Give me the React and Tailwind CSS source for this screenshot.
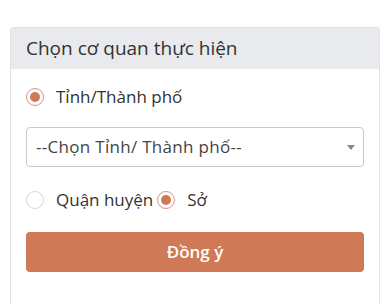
import React from "react";

function Radio({ checked }) {
  return (
    <span
      className={
        "flex h-[18px] w-[18px] shrink-0 items-center justify-center rounded-full border bg-white " +
        (checked ? "border-[#d4967c]" : "border-[#d6d6d6]")
      }
    >
      {checked && <span className="h-[10px] w-[10px] rounded-full bg-[#cf7955]" />}
    </span>
  );
}

export default function App() {
  return (
    <div
      className="h-[304px] w-[392px] overflow-hidden bg-white pt-[27px] pl-[10px]"
      style={{ fontFamily: "'Open Sans', Lato, sans-serif" }}
    >
      <div className="h-[300px] w-[370px] rounded-t-[3px] border border-[#e1e3e6]">
        <div className="flex h-[41px] items-center bg-[#e9eaed] px-[15px] text-[19px] text-[#333]">
          Chọn cơ quan thực hiện
        </div>
        <div className="px-[15px] pt-[16px]">
          <label className="flex h-[24px] items-center gap-[12px] text-[17px] text-[#333]">
            <Radio checked />
            <span>Tỉnh/Thành phố</span>
          </label>
          <div className="mt-[18px] flex h-[40px] w-[338px] items-center justify-between rounded-[4px] border border-[#c9c9c9] pl-[9px] pr-[8px] text-[17px] tracking-[0.3px] text-[#444]">
            <span>--Chọn Tỉnh/ Thành phố--</span>
            <span className="h-0 w-0 border-x-[4px] border-t-[5px] border-x-transparent border-t-[#888]" />
          </div>
          <div className="mt-[21px] flex h-[24px] items-center text-[17px] text-[#333]">
            <Radio />
            <span className="ml-[12px]">Quận huyện</span>
            <span className="ml-[4px]">
              <Radio checked />
            </span>
            <span className="ml-[12px]">Sở</span>
          </div>
          <button className="mt-[20px] flex h-[40px] w-[338px] items-center justify-center rounded-[4px] bg-[#cf7956] text-[17px] font-semibold text-white">
            Đồng ý
          </button>
        </div>
      </div>
    </div>
  );
}
